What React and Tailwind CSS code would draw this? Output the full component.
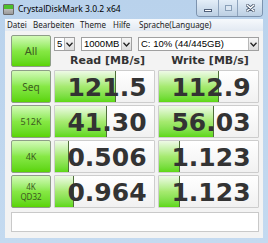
import React from 'react';

const rows = [
  { label: ['Seq'], size: 'text-[10px]', read: '121.5', write: '112.9', rw: 61, ww: 60 },
  { label: ['512K'], size: 'text-[9px]', read: '41.30', write: '56.03', rw: 52, ww: 55 },
  { label: ['4K'], size: 'text-[9px]', read: '0.506', write: '1.123', rw: 14, ww: 21 },
  { label: ['4K', 'QD32'], size: 'text-[8px]', read: '0.964', write: '1.123', rw: 19, ww: 21 },
];

const GreenButton = ({ children, className = '' }) => (
  <div
    className={`flex flex-col items-center justify-center rounded-[2px] border border-[#8e9e88] bg-gradient-to-b from-[#d2fab6] via-[#86e844] to-[#5ad400] text-[#3d5a22] leading-[10px] ${className}`}
  >
    {children}
  </div>
);

const ResultCell = ({ value, width }) => (
  <div className="relative h-full flex-1 overflow-hidden rounded-[1px] border border-[#cdcdcd] bg-gradient-to-b from-white to-[#f1f1f1]">
    <div
      className="absolute left-0 top-0 bottom-0 border-r border-[#4f6f3a] bg-gradient-to-b from-[#eefae6] via-[#a6ea70] to-[#5ed812]"
      style={{ width }}
    />
    <div className="relative flex h-full items-center justify-center pl-[5px] pt-[2px] text-[25px] font-bold text-[#333333] [font-family:'DejaVu_Sans',sans-serif]">
      {value}
    </div>
  </div>
);

const Select = ({ value, className = '' }) => (
  <div className={`flex h-[14px] items-center border border-[#a0a0a0] bg-white pl-[2px] ${className}`}>
    <span className="flex-1 overflow-hidden whitespace-nowrap text-[9.5px] leading-none text-black">{value}</span>
    <div className="flex h-[12px] w-[10px] shrink-0 items-center justify-center border-l border-[#b8b8b8] bg-gradient-to-b from-[#f6f6f6] to-[#dcdcdc]">
      <svg width="7" height="5" viewBox="0 0 7 5">
        <path d="M0.5 0.8 L3.5 4 L6.5 0.8" fill="none" stroke="#222" strokeWidth="1.3" />
      </svg>
    </div>
  </div>
);

export default function App() {
  return (
    <div className="flex h-[243px] w-[268px] flex-col bg-gradient-to-b from-[#b9d2ec] to-[#c4daf0] [font-family:'Noto_Sans',sans-serif]">
      {/* title bar */}
      <div className="relative flex h-[19px] items-center pl-[3px]">
        <div className="mr-[4px] flex h-[11px] w-[11px] flex-col overflow-hidden rounded-[1px] border border-[#6a6a6a] bg-gradient-to-b from-[#d8d8d8] to-[#9a9a9a]">
          <div className="h-[4px] bg-[#4cc02c]" />
        </div>
        <span className="text-[8.5px] text-black">CrystalDiskMark 3.0.2 x64</span>
        <div className="absolute right-[5px] top-0 flex h-[17px] overflow-hidden rounded-b-[4px] border border-t-0 border-[#7d93ae]">
          <div className="flex w-[22px] items-end justify-center border-r border-[#8fa4bd] bg-gradient-to-b from-[#e4eef8] to-[#bccfe3] pb-[4px]">
            <div className="h-[3px] w-[8px] border border-[#50607a] bg-white" />
          </div>
          <div className="flex w-[19px] items-center justify-center border-r border-[#8fa4bd] bg-gradient-to-b from-[#e4eef8] to-[#bccfe3]">
            <div className="h-[6px] w-[7px] border border-[#8aa0b8] bg-[#dbe6f2]" />
          </div>
          <div className="flex w-[24px] items-center justify-center bg-gradient-to-b from-[#e4eef8] to-[#bccfe3]">
            <svg width="9" height="8" viewBox="0 0 9 8">
              <path d="M1 1 L8 7 M8 1 L1 7" stroke="#4a5a70" strokeWidth="3" strokeLinecap="round" />
              <path d="M1 1 L8 7 M8 1 L1 7" stroke="#ffffff" strokeWidth="1.4" strokeLinecap="round" />
            </svg>
          </div>
        </div>
      </div>

      <div className="flex flex-1 flex-col px-[5px] pb-[5px]">
        {/* menu */}
        <div className="flex h-[12px] items-center bg-gradient-to-b from-[#f6f9fc] to-[#e2e9f2] pl-[2px] text-[8px] text-[#222]">
          <span className="w-[26px]">Datei</span>
          <span className="w-[47px]">Bearbeiten</span>
          <span className="w-[33px]">Theme</span>
          <span className="w-[26px]">Hilfe</span>
          <span>Sprache(Language)</span>
        </div>

        {/* client */}
        <div className="flex flex-1 flex-col bg-[#f3f3f3] pl-[6px] pr-[4px] pt-[4px]">
          <div className="flex h-[32px] gap-[3px]">
            <GreenButton className="w-[40px] text-[11px]">All</GreenButton>
            <div className="flex flex-1 flex-col">
              <div className="mt-[2px] flex gap-[6px] [font-family:'Liberation_Sans',sans-serif]">
                <Select value="5" className="w-[21px]" />
                <Select value="1000MB" className="w-[51px]" />
                <Select value="C: 10% (44/445GB)" className="flex-1" />
              </div>
              <div className="flex flex-1 items-center pt-[2px] text-[11px] font-bold text-[#333] [font-family:'DejaVu_Sans',sans-serif]">
                <div className="w-[103px] pl-[4px] text-center">Read [MB/s]</div>
                <div className="flex-1 pl-[4px] text-center">Write [MB/s]</div>
              </div>
            </div>
          </div>

          {rows.map((r, i) => (
            <div key={i} className={`flex h-[33px] gap-[3px] ${i === 0 ? 'mt-[3px]' : 'mt-[2px]'}`}>
              <GreenButton className={`w-[40px] ${r.size}`}>
                {r.label.map((l) => (
                  <span key={l}>{l}</span>
                ))}
              </GreenButton>
              <ResultCell value={r.read} width={r.rw} />
              <ResultCell value={r.write} width={r.ww} />
            </div>
          ))}

          <div className="mt-[4px] h-[20px] border border-[#c9c9c9] bg-white" />
        </div>
      </div>
    </div>
  );
}
